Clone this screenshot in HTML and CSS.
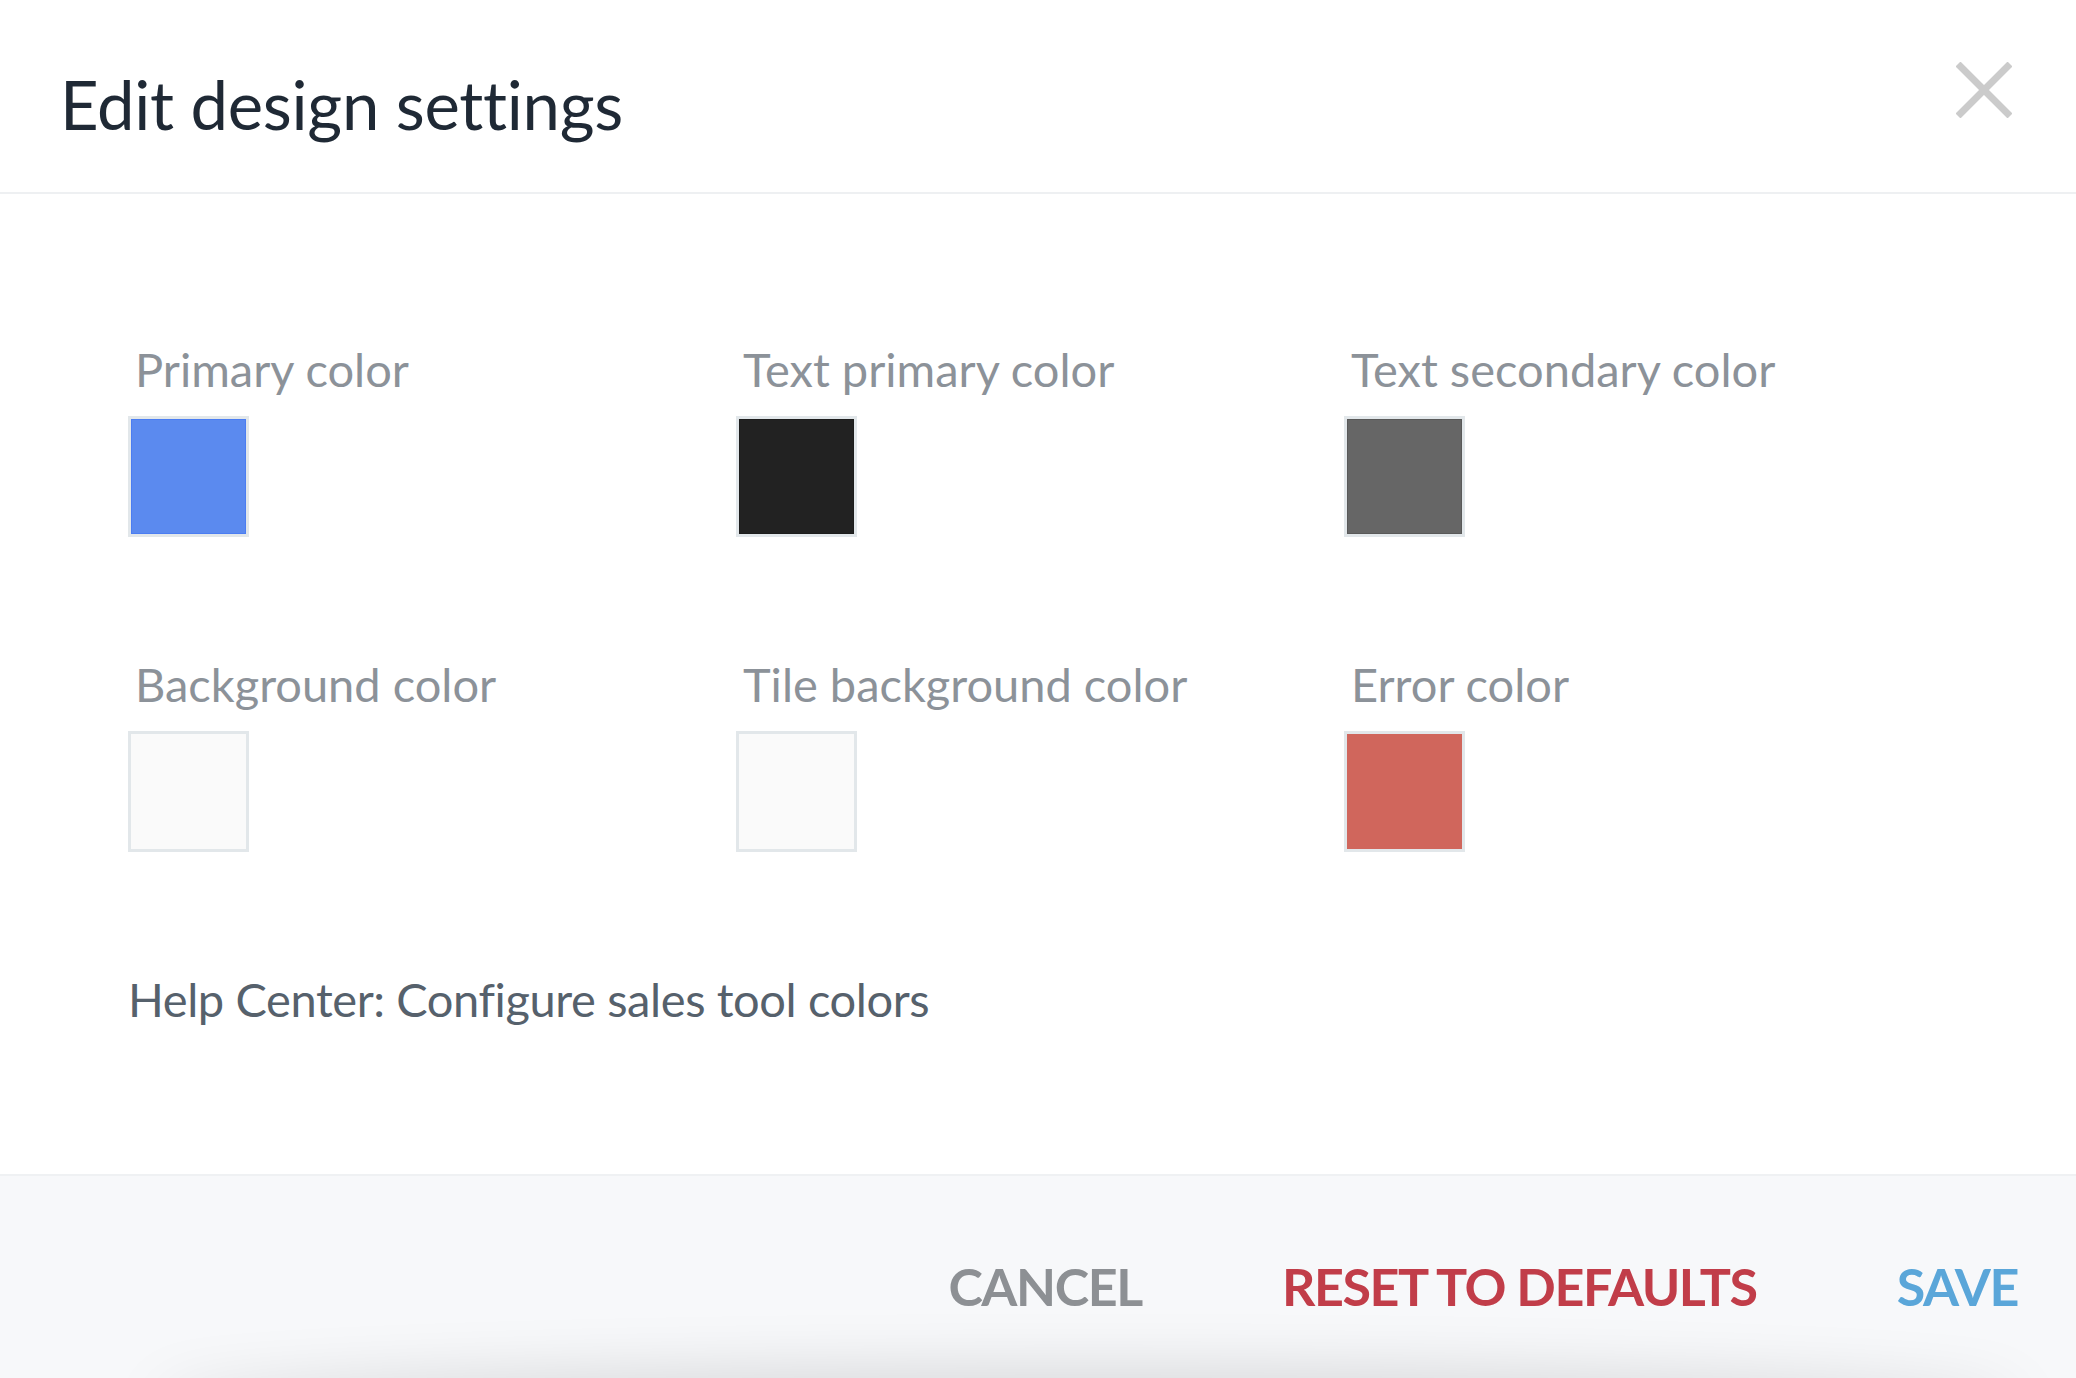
FILE: index.html
```html
<!DOCTYPE html>
<html lang="en">
<head>
<meta charset="utf-8">
<title>Edit design settings</title>
<link rel="stylesheet" href="styles.css">
</head>
<body>
<div class="modal">
  <header class="modal-header">
    <h1 class="modal-title">Edit design settings</h1>
    <button class="close-btn" aria-label="Close">
      <svg width="56" height="56" viewBox="0 0 56 56" aria-hidden="true">
        <path d="M2 2 L54 54 M54 2 L2 54" stroke="#cbcbcb" stroke-width="7" fill="none"/>
      </svg>
    </button>
  </header>
  <main class="modal-body">
    <div class="color-grid">
      <div class="color-cell">
        <div class="color-label">Primary color</div>
        <div class="swatch"><div class="swatch-fill fill-primary"></div></div>
      </div>
      <div class="color-cell">
        <div class="color-label">Text primary color</div>
        <div class="swatch"><div class="swatch-fill fill-text-primary"></div></div>
      </div>
      <div class="color-cell">
        <div class="color-label">Text secondary color</div>
        <div class="swatch"><div class="swatch-fill fill-text-secondary"></div></div>
      </div>
      <div class="color-cell">
        <div class="color-label">Background color</div>
        <div class="swatch"><div class="swatch-fill fill-bg"></div></div>
      </div>
      <div class="color-cell">
        <div class="color-label">Tile background color</div>
        <div class="swatch"><div class="swatch-fill fill-tile"></div></div>
      </div>
      <div class="color-cell">
        <div class="color-label">Error color</div>
        <div class="swatch"><div class="swatch-fill fill-error"></div></div>
      </div>
    </div>
    <a class="help-link" href="#">Help Center: Configure sales tool colors</a>
  </main>
  <footer class="modal-footer">
    <button class="btn btn-cancel">CANCEL</button>
    <button class="btn btn-reset">RESET TO DEFAULTS</button>
    <button class="btn btn-save">SAVE</button>
    <div class="footer-shadow"></div>
  </footer>
</div>
</body>
</html>
```

FILE: styles.css
```css
html, body {
  margin: 0;
  padding: 0;
  background: #ffffff;
}

body {
  font-family: Lato, "Liberation Sans", sans-serif;
  width: 2076px;
  height: 1378px;
  overflow: hidden;
}

.modal {
  width: 2076px;
  height: 1378px;
  display: flex;
  flex-direction: column;
  background: #ffffff;
}

.modal-header {
  box-sizing: border-box;
  border-bottom: 2px solid #eef0f2;
  flex: 0 0 194px;
  display: flex;
  justify-content: space-between;
  align-items: flex-start;
  padding: 0 64px 0 60px;
}

.modal-title {
  margin: 0;
  padding-top: 64px;
  font-size: 67px;
  line-height: 80px;
  font-weight: 400;
  color: #1f2935;
  letter-spacing: -0.3px;
}

.close-btn {
  margin-top: 62px;
  padding: 0;
  border: 0;
  background: transparent;
  width: 56px;
  height: 56px;
  display: block;
}

.close-btn svg {
  display: block;
}

.modal-body {
  flex: 0 0 980px;
  box-sizing: border-box;
  padding: 147px 0 0 128px;
}

.color-grid {
  display: grid;
  grid-template-columns: repeat(3, 608px);
  row-gap: 119px;
}

.color-cell {
  display: flex;
  flex-direction: column;
  align-items: flex-start;
}

.color-label {
  font-size: 47px;
  line-height: 56px;
  color: #8c9299;
  padding-left: 7px;
  margin-bottom: 19px;
}

.swatch {
  width: 121px;
  height: 121px;
  box-sizing: border-box;
  border: 3px solid #e2e7ea;
}

.swatch-fill {
  width: 100%;
  height: 100%;
  box-sizing: border-box;
  border: 1px solid rgba(0, 0, 0, 0.12);
}

.fill-primary { background: #5b8aef; border-color: #4b7df2; }
.fill-text-primary { background: #222222; }
.fill-text-secondary { background: #666666; }
.fill-bg { background: #fafafa; border-color: #fafafa; }
.fill-tile { background: #fafafa; border-color: #fafafa; }
.fill-error { background: #d0665c; border-color: #d0665c; }

.help-link {
  display: block;
  margin-top: 118px;
  font-size: 47px;
  line-height: 58px;
  color: #56616c;
  text-decoration: none;
  letter-spacing: -0.4px;
}

.modal-footer {
  position: relative;
  flex: 1 1 auto;
  box-sizing: border-box;
  border-top: 2px solid #eff1f3;
  background: #f7f8fa;
  display: flex;
  justify-content: flex-end;
  align-items: flex-start;
  padding: 79px 58px 0 0;
  gap: 140px;
  overflow: hidden;
}

.btn {
  border: 0;
  background: transparent;
  padding: 0;
  font-family: Lato, "Liberation Sans", sans-serif;
  font-size: 52px;
  line-height: 62px;
  font-weight: 700;
  letter-spacing: -1.4px;
  cursor: pointer;
}

.btn-cancel { color: #8d9094; }
.btn-reset { color: #c13d49; }
.btn-save { color: #5aa6d9; }

.footer-shadow {
  position: absolute;
  left: 160px;
  right: 60px;
  bottom: -50px;
  height: 50px;
  border-radius: 50%;
  box-shadow: 0 0 60px 10px rgba(0, 0, 0, 0.13);
}
```
